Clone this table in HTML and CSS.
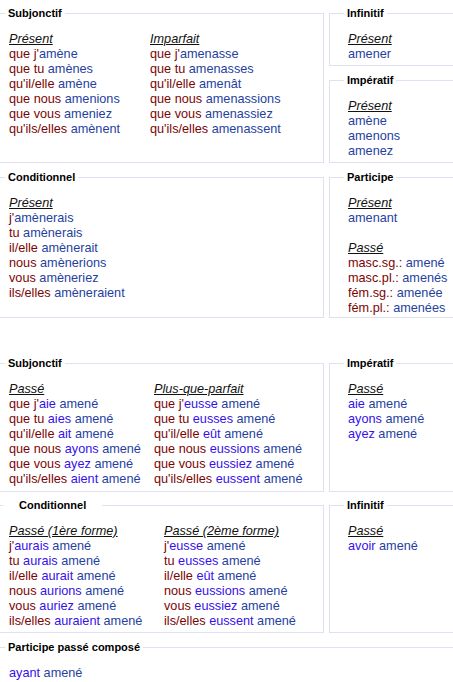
FILE: index.html
```html
<!DOCTYPE html>
<html lang="fr">
<head>
<meta charset="utf-8">
<title>amener</title>
<link rel="stylesheet" href="styles.css">
</head>
<body>
<div class="page">

  <div class="row">
    <fieldset class="box main">
      <legend class="lg">Subjonctif</legend>
      <div class="cols cols-1">
        <div class="col">
          <div class="tense">Présent</div>
          <div><span class="p">que j'</span><span class="v">amène</span></div>
          <div><span class="p">que tu </span><span class="v">amènes</span></div>
          <div><span class="p">qu'il/elle </span><span class="v">amène</span></div>
          <div><span class="p">que nous </span><span class="v">amenions</span></div>
          <div><span class="p">que vous </span><span class="v">ameniez</span></div>
          <div><span class="p">qu'ils/elles </span><span class="v">amènent</span></div>
        </div>
        <div class="col">
          <div class="tense">Imparfait</div>
          <div><span class="p">que j'</span><span class="v">amenasse</span></div>
          <div><span class="p">que tu </span><span class="v">amenasses</span></div>
          <div><span class="p">qu'il/elle </span><span class="v">amenât</span></div>
          <div><span class="p">que nous </span><span class="v">amenassions</span></div>
          <div><span class="p">que vous </span><span class="v">amenassiez</span></div>
          <div><span class="p">qu'ils/elles </span><span class="v">amenassent</span></div>
        </div>
      </div>
    </fieldset>
    <div class="side">
      <fieldset class="box aside">
        <legend class="lg">Infinitif</legend>
        <div class="body">
          <div class="tense">Présent</div>
          <div class="v">amener</div>
        </div>
      </fieldset>
      <fieldset class="box aside grow">
        <legend class="lg">Impératif</legend>
        <div class="body">
          <div class="tense">Présent</div>
          <div class="v">amène</div>
          <div class="v">amenons</div>
          <div class="v">amenez</div>
        </div>
      </fieldset>
    </div>
  </div>

  <div class="row row-2">
    <fieldset class="box main">
      <legend class="lg">Conditionnel</legend>
      <div class="cols">
        <div class="col">
          <div class="tense">Présent</div>
          <div><span class="p">j'</span><span class="v">amènerais</span></div>
          <div><span class="p">tu </span><span class="v">amènerais</span></div>
          <div><span class="p">il/elle </span><span class="v">amènerait</span></div>
          <div><span class="p">nous </span><span class="v">amènerions</span></div>
          <div><span class="p">vous </span><span class="v">amèneriez</span></div>
          <div><span class="p">ils/elles </span><span class="v">amèneraient</span></div>
        </div>
      </div>
    </fieldset>
    <div class="side">
      <fieldset class="box aside grow participe">
        <legend class="lg">Participe</legend>
        <div class="body">
          <div class="tense">Présent</div>
          <div class="v">amenant</div>
          <div class="tense spaced">Passé</div>
          <div><span class="p">masc.sg.: </span><span class="v">amené</span></div>
          <div><span class="p">masc.pl.: </span><span class="v">amenés</span></div>
          <div><span class="p">fém.sg.: </span><span class="v">amenée</span></div>
          <div><span class="p">fém.pl.: </span><span class="v">amenées</span></div>
        </div>
      </fieldset>
    </div>
  </div>

  <div class="row row-3">
    <fieldset class="box main">
      <legend class="lg">Subjonctif</legend>
      <div class="cols cols-3">
        <div class="col">
          <div class="tense">Passé</div>
          <div><span class="p">que j'</span><span class="a">aie</span> <span class="v">amené</span></div>
          <div><span class="p">que tu </span><span class="a">aies</span> <span class="v">amené</span></div>
          <div><span class="p">qu'il/elle </span><span class="a">ait</span> <span class="v">amené</span></div>
          <div><span class="p">que nous </span><span class="a">ayons</span> <span class="v">amené</span></div>
          <div><span class="p">que vous </span><span class="a">ayez</span> <span class="v">amené</span></div>
          <div><span class="p">qu'ils/elles </span><span class="a">aient</span> <span class="v">amené</span></div>
        </div>
        <div class="col">
          <div class="tense">Plus-que-parfait</div>
          <div><span class="p">que j'</span><span class="a">eusse</span> <span class="v">amené</span></div>
          <div><span class="p">que tu </span><span class="a">eusses</span> <span class="v">amené</span></div>
          <div><span class="p">qu'il/elle </span><span class="a">eût</span> <span class="v">amené</span></div>
          <div><span class="p">que nous </span><span class="a">eussions</span> <span class="v">amené</span></div>
          <div><span class="p">que vous </span><span class="a">eussiez</span> <span class="v">amené</span></div>
          <div><span class="p">qu'ils/elles </span><span class="a">eussent</span> <span class="v">amené</span></div>
        </div>
      </div>
    </fieldset>
    <div class="side">
      <fieldset class="box aside grow">
        <legend class="lg">Impératif</legend>
        <div class="body">
          <div class="tense">Passé</div>
          <div><span class="a">aie</span> <span class="v">amené</span></div>
          <div><span class="a">ayons</span> <span class="v">amené</span></div>
          <div><span class="a">ayez</span> <span class="v">amené</span></div>
        </div>
      </fieldset>
    </div>
  </div>

  <div class="row row-4">
    <fieldset class="box main">
      <legend class="lg lg-wide">Conditionnel</legend>
      <div class="cols cols-4">
        <div class="col">
          <div class="tense">Passé (1ère forme)</div>
          <div><span class="p">j'</span><span class="a">aurais</span> <span class="v">amené</span></div>
          <div><span class="p">tu </span><span class="a">aurais</span> <span class="v">amené</span></div>
          <div><span class="p">il/elle </span><span class="a">aurait</span> <span class="v">amené</span></div>
          <div><span class="p">nous </span><span class="a">aurions</span> <span class="v">amené</span></div>
          <div><span class="p">vous </span><span class="a">auriez</span> <span class="v">amené</span></div>
          <div><span class="p">ils/elles </span><span class="a">auraient</span> <span class="v">amené</span></div>
        </div>
        <div class="col">
          <div class="tense">Passé (2ème forme)</div>
          <div><span class="p">j'</span><span class="a">eusse</span> <span class="v">amené</span></div>
          <div><span class="p">tu </span><span class="a">eusses</span> <span class="v">amené</span></div>
          <div><span class="p">il/elle </span><span class="a">eût</span> <span class="v">amené</span></div>
          <div><span class="p">nous </span><span class="a">eussions</span> <span class="v">amené</span></div>
          <div><span class="p">vous </span><span class="a">eussiez</span> <span class="v">amené</span></div>
          <div><span class="p">ils/elles </span><span class="a">eussent</span> <span class="v">amené</span></div>
        </div>
      </div>
    </fieldset>
    <div class="side">
      <fieldset class="box aside grow">
        <legend class="lg">Infinitif</legend>
        <div class="body">
          <div class="tense">Passé</div>
          <div><span class="a">avoir</span> <span class="v">amené</span></div>
        </div>
      </fieldset>
    </div>
  </div>

  <div class="row row-5">
    <fieldset class="box full">
      <legend class="lg">Participe passé composé</legend>
      <div class="cols">
        <div><span class="a">ayant</span> <span class="v">amené</span></div>
      </div>
    </fieldset>
  </div>

</div>
</body>
</html>
```

FILE: styles.css
```css
html, body {
  margin: 0;
  padding: 0;
  background: #ffffff;
  overflow: hidden;
}

body {
  font-family: "Liberation Sans", Arial, sans-serif;
  font-size: 12.7px;
  line-height: 15px;
  color: #111111;
}

.page {
  width: 470px;
  margin-left: -6px;
  padding-top: 6px;
}

.row {
  display: flex;
  align-items: stretch;
  gap: 5px;
}

.row-2 { margin-top: 7px; }
.row-3 { margin-top: 38px; }
.row-4 { margin-top: 6px; }
.row-5 { margin-top: 7px; }

.box {
  margin: 0;
  padding: 0;
  min-width: 0;
  border: 1px solid #dfe1f1;
}

.main {
  width: 330px;
  flex: 0 0 330px;
  box-sizing: border-box;
}

.full {
  flex: 1 1 auto;
  border-bottom: none;
}

.side {
  flex: 1 1 auto;
  display: flex;
  flex-direction: column;
  gap: 7px;
}

.grow { flex: 1 1 auto; }

.lg {
  font-size: 11px;
  line-height: 14px;
  font-weight: bold;
  color: #000000;
  padding: 0 3px;
  margin-left: 10px;
}

.aside .lg { margin-left: 14px; }

.lg-wide {
  margin-left: 8px;
  padding: 0 16px;
}

.cols {
  display: grid;
  grid-template-columns: auto;
  padding: 12px 8px 3px 14px;
}

.cols-1 { grid-template-columns: 141px auto; }
.cols-3 { grid-template-columns: 145px auto; padding-bottom: 4px; }
.cols-4 { grid-template-columns: 155px auto; }

.row-5 .cols { padding-bottom: 20px; }

.body {
  padding: 12px 4px 3px 18px;
}

.participe .body { padding-bottom: 1px; }

.col { white-space: nowrap; }

.tense {
  font-style: italic;
  text-decoration: underline;
  text-underline-offset: 1px;
  color: #111111;
}

.spaced { margin-top: 15px; }

.p { color: #7c0303; }
.v { color: #263f9f; }
.a { color: #3510ea; }
```
